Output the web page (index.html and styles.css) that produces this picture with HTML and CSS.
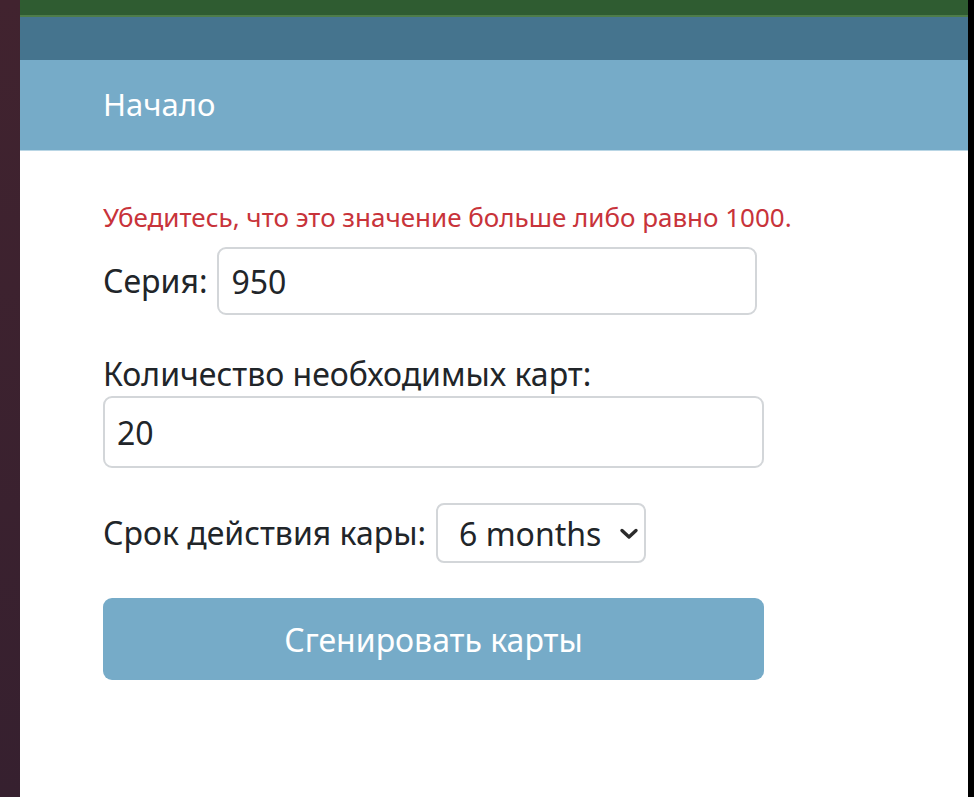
FILE: index.html
```html
<!DOCTYPE html>
<html lang="ru">
<head>
<meta charset="utf-8">
<title>Начало</title>
<link rel="stylesheet" href="styles.css">
</head>
<body>
<div class="screen">
  <div class="side-left"></div>
  <div class="page">
    <div class="bar-green"></div>
    <div class="bar-steel"></div>
    <nav class="navbar"><a class="nav-link" href="#">Начало</a></nav>
    <main class="content">
      <form class="card-form">
        <p class="error">Убедитесь, что это значение больше либо равно 1000.</p>
        <div class="row-inline row-series">
          <label class="label" for="series">Серия:</label>
          <input class="field field-series" id="series" type="text" value="950">
        </div>
        <div class="row-block">
          <label class="label" for="count">Количество необходимых карт:</label>
          <input class="field field-wide" id="count" type="text" value="20">
        </div>
        <div class="row-inline row-select">
          <label class="label" for="term">Срок действия кары:</label>
          <div class="select" id="term">
            <span class="select-value">6 months</span>
            <svg class="chevron" width="20" height="12" viewBox="0 0 20 12"><path d="M3 2.5 L10 9 L17 2.5" fill="none" stroke="#2b2b2b" stroke-width="3.4" stroke-linecap="round" stroke-linejoin="round"/></svg>
          </div>
        </div>
        <button class="btn" type="button">Сгенировать карты</button>
      </form>
    </main>
  </div>
  <div class="side-right"></div>
</div>
</body>
</html>
```

FILE: styles.css
```css
* { box-sizing: border-box; }
html, body { margin: 0; padding: 0; }
body {
  font-family: "Noto Sans", "DejaVu Sans", sans-serif;
  color: #212529;
  background: #fff;
}
.screen {
  display: flex;
  width: 974px;
  height: 797px;
  overflow: hidden;
}
.side-left {
  width: 20px;
  flex: none;
  background: linear-gradient(#41232f, #36202f);
}
.side-right {
  width: 6px;
  flex: none;
  background: #000;
}
.page {
  flex: 1;
  display: flex;
  flex-direction: column;
  background: #fff;
}
.bar-green {
  height: 17px;
  flex: none;
  background: #2f5c31;
  border-bottom: 2px solid #4e7c49;
}
.bar-steel {
  height: 43px;
  flex: none;
  background: #45748e;
}
.navbar {
  height: 91px;
  flex: none;
  background: #76abc8;
  border-bottom: 1px solid #b9d6e5;
  display: flex;
  align-items: center;
  padding-left: 83px;
}
.nav-link {
  color: #fff;
  text-decoration: none;
  font-size: 31px;
  padding-bottom: 2px;
}
.content {
  padding: 0 0 0 83px;
}
.card-form {
  width: 661px;
  display: flex;
  flex-direction: column;
}
.error {
  margin: 48px 0 0;
  color: #c8333a;
  font-size: 26px;
  line-height: 36px;
  white-space: nowrap;
}
.label {
  font-size: 32px;
  line-height: 40px;
}
.row-inline {
  display: flex;
  align-items: center;
  gap: 10px;
  flex: none;
}
.row-series { margin-top: 12px; }
.field {
  font-family: inherit;
  font-size: 32px;
  color: #212529;
  border: 2px solid #d3d6d9;
  border-radius: 9px;
  background: #fff;
  padding: 0 12px;
  outline: none;
  flex: none;
}
.field-series {
  width: 540px;
  height: 68px;
}
.row-block {
  display: flex;
  flex-direction: column;
  margin-top: 39px;
  flex: none;
}
.row-block .label { margin-bottom: 2px; }
.field-wide {
  width: 661px;
  height: 72px;
}
.row-select {
  margin-top: 35px;
  gap: 10px;
}
.select {
  width: 210px;
  height: 60px;
  flex: none;
  border: 2px solid #d3d6d9;
  border-radius: 8px;
  display: flex;
  align-items: center;
  justify-content: space-between;
  padding: 0 5px 0 21px;
  font-size: 32px;
}
.chevron { margin-top: 1px; }
.btn {
  margin-top: 35px;
  width: 661px;
  height: 82px;
  flex: none;
  border: none;
  border-radius: 9px;
  background: #76abc8;
  color: #fff;
  font-family: inherit;
  font-size: 32px;
}
```
